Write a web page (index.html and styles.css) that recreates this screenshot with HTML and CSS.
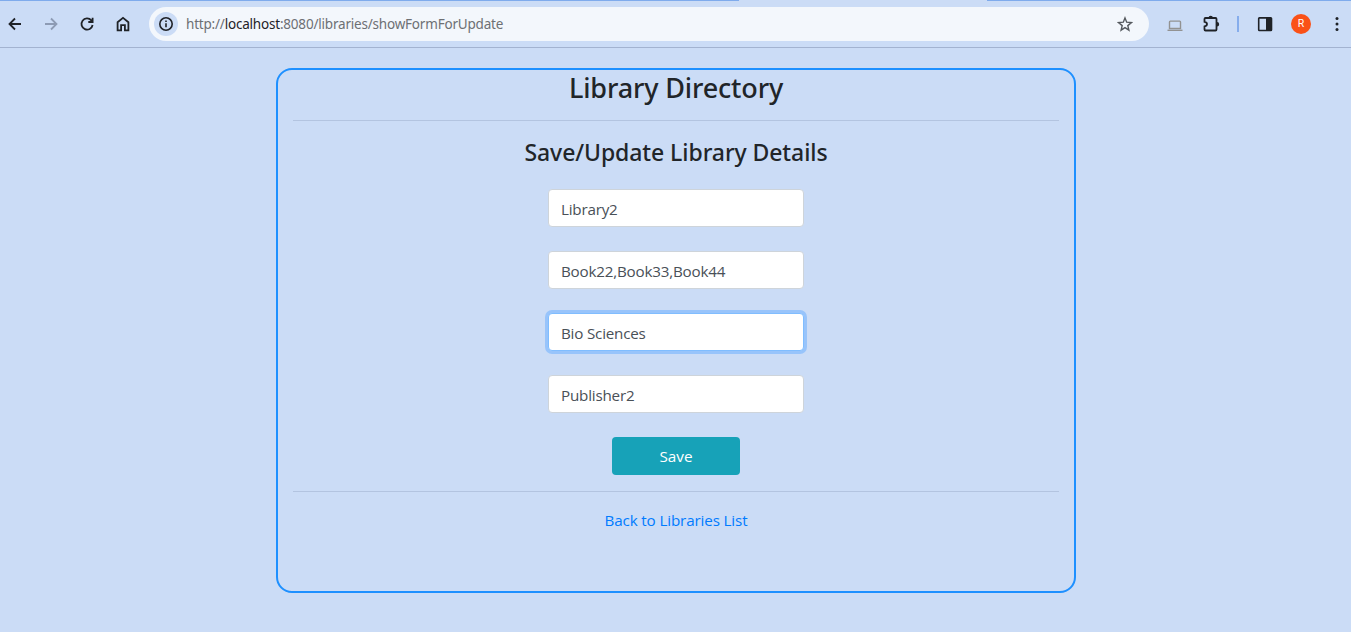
FILE: index.html
```html
<!DOCTYPE html>
<html lang="en">
<head>
<meta charset="utf-8">
<title>Save Library</title>
<link rel="stylesheet" href="styles.css">
</head>
<body>
<header class="toolbar">
  <div class="tab-edge"><span class="edge-left"></span><span class="edge-right"></span></div>
  <nav class="nav-icons">
    <svg class="icon" viewBox="0 0 16 16"><path d="M14 8H3M8 2.500 2.500 8 8 13.500" /></svg>
    <svg class="icon dim" viewBox="0 0 16 16"><path d="M2 8h11M8 2.500 13.500 8 8 13.500" /></svg>
    <svg class="icon" viewBox="0 0 16 16"><path d="M13.600 9A5.600 5.600 0 1 1 12.300 4.300L13.500 5.500M13.600 1.800V6H9.300" /></svg>
    <svg class="icon" viewBox="0 0 16 16"><path d="M2.600 14.300V6.200L8 1.900l5.400 4.300v8.100H9.900V9.200H6.100v5.100z" /></svg>
  </nav>
  <div class="address">
    <span class="info"><svg class="icon thin" viewBox="0 0 16 16"><circle cx="8" cy="8" r="6.200" /><path d="M8 7.200v4M8 4.500v1.600" /></svg></span>
    <span class="url">http://<b>localhost</b>:8080/libraries/showFormForUpdate</span>
    <svg class="icon star" viewBox="0 0 16 16"><path d="m8 1.900 1.700 4.300 4.700.4-3.600 3 1.100 4.600L8 11.700l-3.900 2.500 1.100-4.600-3.600-3 4.700-.4z" /></svg>
  </div>
  <div class="actions">
    <svg class="icon laptop" viewBox="0 0 16 16"><path d="M2.500 12.500V5.900q0-.8.800-.8h9.400q.8 0 .8.800v6.600z" /><path d="M.5 14.300h15" /></svg>
    <svg class="icon puzzle" viewBox="0 0 18 18"><path d="M3.500 3h10q1 0 1 1v10.500q0 1-1 1h-10q-1 0-1-1v-3q2.500-.5 2.500-2.400T2.500 6.800V4q0-1 1-1z" /><path class="solid" d="M6.500 3a2.200 2.200 0 0 1 4.400 0zM15 7a2.200 2.200 0 0 1 0 4.400z" /></svg>
    <span class="divider"></span>
    <svg class="icon panel" viewBox="0 0 16 16"><rect x="1.700" y="1.900" width="12.800" height="12.600" rx=".7" /><path class="solid" d="M9 2h5.500v12.500H9z" /></svg>
    <span class="avatar">R</span>
    <svg class="icon dots" viewBox="0 0 16 16"><circle cx="8" cy="2.600" r="1.500" /><circle cx="8" cy="8" r="1.500" /><circle cx="8" cy="13.600" r="1.500" /></svg>
  </div>
</header>
<main class="card">
  <h1 class="title">Library Directory</h1>
  <hr class="rule">
  <h2 class="subtitle">Save/Update Library Details</h2>
  <form class="form">
    <input class="field" type="text" value="Library2">
    <input class="field" type="text" value="Book22,Book33,Book44">
    <input class="field focused" type="text" value="Bio Sciences">
    <input class="field" type="text" value="Publisher2">
    <button class="save" type="button">Save</button>
  </form>
  <hr class="rule">
  <a class="back" href="#">Back to Libraries List</a>
</main>
</body>
</html>
```
FILE: styles.css
```css
* { box-sizing: border-box; }
body {
  margin: 0;
  height: 632px;
  overflow: hidden;
  background: #cbdcf6;
  color: #212529;
  font: 16px/24px "Open Sans", "Noto Sans", sans-serif;
}
.toolbar {
  position: relative;
  display: flex;
  align-items: center;
  height: 48px;
  border-bottom: 1px solid #a3b3d0;
}
.tab-edge {
  position: absolute;
  inset: 0 0 auto;
  display: flex;
  justify-content: space-between;
  height: 1px;
}
.edge-left { width: 739px; background: #7fabec; }
.edge-right { width: 364px; background: #7fabec; }
.nav-icons { display: flex; gap: 20px; padding-left: 7px; width: 149px; }
.icon {
  display: block;
  flex: none;
  width: 16px;
  height: 16px;
  fill: none;
  stroke: #1f2227;
  stroke-width: 1.8;
}
.icon.dim { stroke: #8d9bb4; }
.icon .solid { fill: #1f2227; stroke: none; }
.address {
  display: flex;
  align-items: center;
  width: 1000px;
  height: 34px;
  padding: 0 16px 0 5px;
  border-radius: 17px;
  background: #f3f7fc;
}
.info {
  display: grid;
  place-items: center;
  width: 24px;
  height: 24px;
  border-radius: 50%;
  background: #cbdcf6;
}
.icon.thin { stroke-width: 1.6; }
.url {
  flex: 1;
  padding-left: 8px;
  color: #6d7074;
  font: 13.500px/24px "Noto Sans", "Open Sans", sans-serif;
  letter-spacing: -0.2px;
  white-space: nowrap;
}
.url b { color: #1f2227; font-weight: 400; }
.icon.star { stroke: #55595e; stroke-width: 1.4; }
.actions { display: flex; align-items: center; flex: 1; padding-left: 18px; }
.icon.laptop { stroke: #929292; stroke-width: 1.4; }
.icon.puzzle { width: 18px; height: 18px; margin-left: 19px; }
.divider { width: 2px; height: 16px; margin-left: 17px; background: #86adec; }
.icon.panel { margin-left: 18px; stroke-width: 1.6; }
.avatar {
  display: grid;
  place-items: center;
  width: 20px;
  height: 20px;
  margin-left: 18px;
  border-radius: 50%;
  background: #fa5117;
  color: #fff;
  font: 10.500px/20px Roboto, sans-serif;
}
.icon.dots { margin-left: 18px; fill: #1f2227; stroke: none; }
.card {
  width: 800px;
  height: 525px;
  margin: 20px 0 0 276px;
  padding: 0 15px;
  border: 2px solid #1e90ff;
  border-radius: 16px;
  text-align: center;
}
.title {
  height: 34px;
  margin: 0;
  font: 500 27px/36px "Noto Sans", "Open Sans", sans-serif;
  letter-spacing: -0.15px;
}
.rule { margin: 16px 0; border: 0; border-top: 1px solid #b3c4e0; }
.subtitle {
  height: 29px;
  margin: 0 0 23px;
  font: 500 23px/31px "Noto Sans", "Open Sans", sans-serif;
  letter-spacing: -0.08px;
}
.form { display: flex; flex-direction: column; align-items: center; gap: 24px; }
.field {
  width: 256px;
  height: 38px;
  padding: 2px 12px 0;
  border: 1px solid #ced4da;
  border-radius: 4px;
  outline: 0;
  background: #fff;
  color: #495057;
  font: 400 15.200px/24px "Open Sans", "Noto Sans", sans-serif;
  letter-spacing: -0.2px;
}
.field.focused { border-color: #80bdff; box-shadow: 0 0 0 3px #98c4fb; }
.save {
  width: 128px;
  height: 38px;
  padding: 0;
  border: 0;
  border-radius: 4px;
  background: #17a2b8;
  color: #fff;
  font: 15.300px/24px "Open Sans", "Noto Sans", sans-serif;
}
.back { color: #007bff; font-size: 15.200px; letter-spacing: -0.13px; text-decoration: none; }
```
